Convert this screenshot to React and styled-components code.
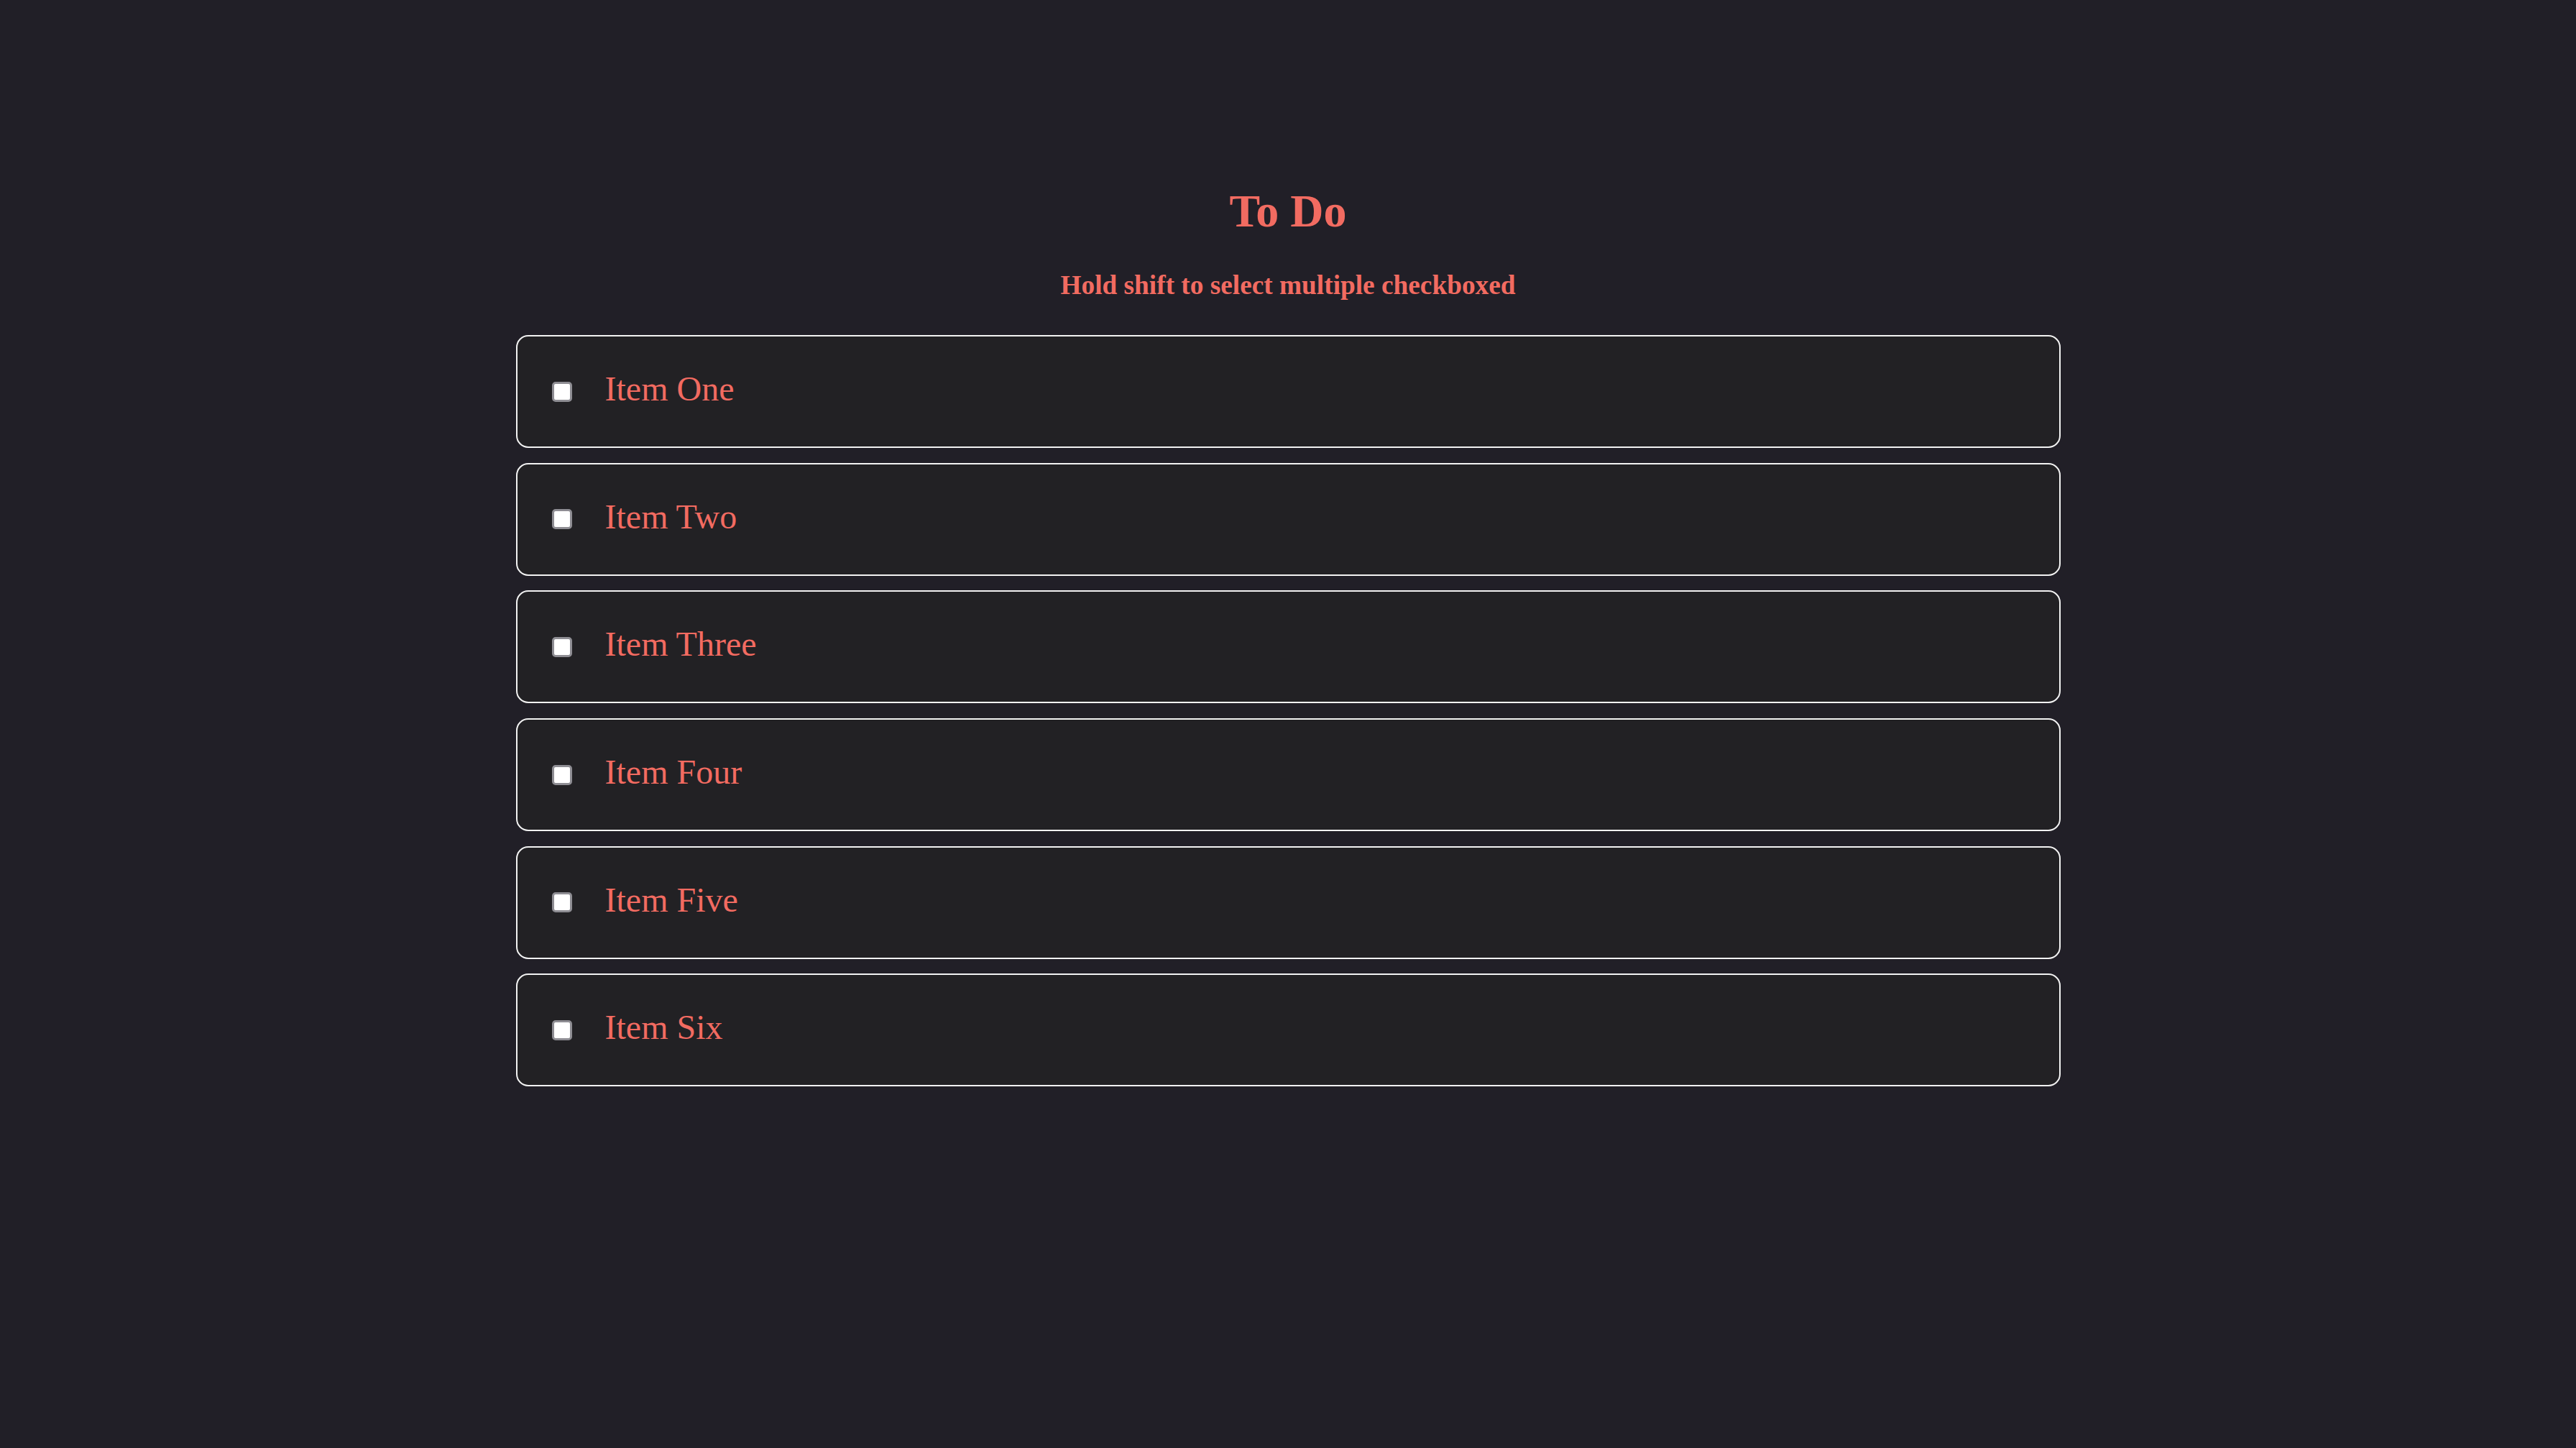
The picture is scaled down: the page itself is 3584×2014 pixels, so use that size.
import React, { useState } from 'react';
import styled, { createGlobalStyle } from 'styled-components';

const items = ['Item One', 'Item Two', 'Item Three', 'Item Four', 'Item Five', 'Item Six'];

export default function App() {
  const [checked, setChecked] = useState(items.map(() => false));
  const [last, setLast] = useState(null);

  const handleCheck = (index) => (e) => {
    const value = e.target.checked;
    const next = [...checked];
    if (e.nativeEvent.shiftKey && last !== null) {
      const [from, to] = last < index ? [last, index] : [index, last];
      for (let i = from; i <= to; i++) next[i] = value;
    } else {
      next[index] = value;
    }
    setChecked(next);
    setLast(index);
  };

  return (
    <>
      <GlobalStyle />
      <StPage>
        <StTitle>To Do</StTitle>
        <StHint>Hold shift to select multiple checkboxed</StHint>
        <StList>
          {items.map((item, i) => (
            <StItem key={item}>
              <StCheckbox type="checkbox" checked={checked[i]} onChange={handleCheck(i)} />
              <StLabel $done={checked[i]}>{item}</StLabel>
            </StItem>
          ))}
        </StList>
      </StPage>
    </>
  );
}

const GlobalStyle = createGlobalStyle`
  html, body {
    margin: 0;
    padding: 0;
    background: #211f27;
  }
  body {
    font-family: "Liberation Serif", "Times New Roman", serif;
  }
`;

const StPage = styled.div`
  min-height: 100vh;
  display: flex;
  flex-direction: column;
  align-items: center;
  padding-top: 262px;
  box-sizing: border-box;
`;

const StTitle = styled.h1`
  margin: 0;
  font-size: 64px;
  line-height: 1;
  font-weight: 700;
  color: #f26b61;
`;

const StHint = styled.h4`
  margin: 52px 0 0;
  font-size: 37.3px;
  line-height: 1;
  font-weight: 700;
  color: #f26b61;
`;

const StList = styled.div`
  margin-top: 51px;
  width: 2149px;
  display: flex;
  flex-direction: column;
  gap: 20.6px;
`;

const StItem = styled.label`
  display: flex;
  align-items: center;
  height: 157px;
  box-sizing: border-box;
  padding-left: 48px;
  gap: 46px;
  border: 2px solid #f2f2f2;
  border-radius: 17px;
  background: #222124;
  cursor: pointer;
`;

const StCheckbox = styled.input`
  appearance: none;
  margin: 0;
  width: 28px;
  height: 28px;
  box-sizing: border-box;
  border: 3px solid #8e8d93;
  border-radius: 5px;
  background: #ffffff;
  cursor: pointer;
  &:checked {
    background: #f26b61;
  }
`;

const StLabel = styled.span`
  font-size: 48px;
  line-height: 1;
  color: #f26b61;
  margin-top: -7px;
  text-decoration: ${(p) => (p.$done ? 'line-through' : 'none')};
`;
